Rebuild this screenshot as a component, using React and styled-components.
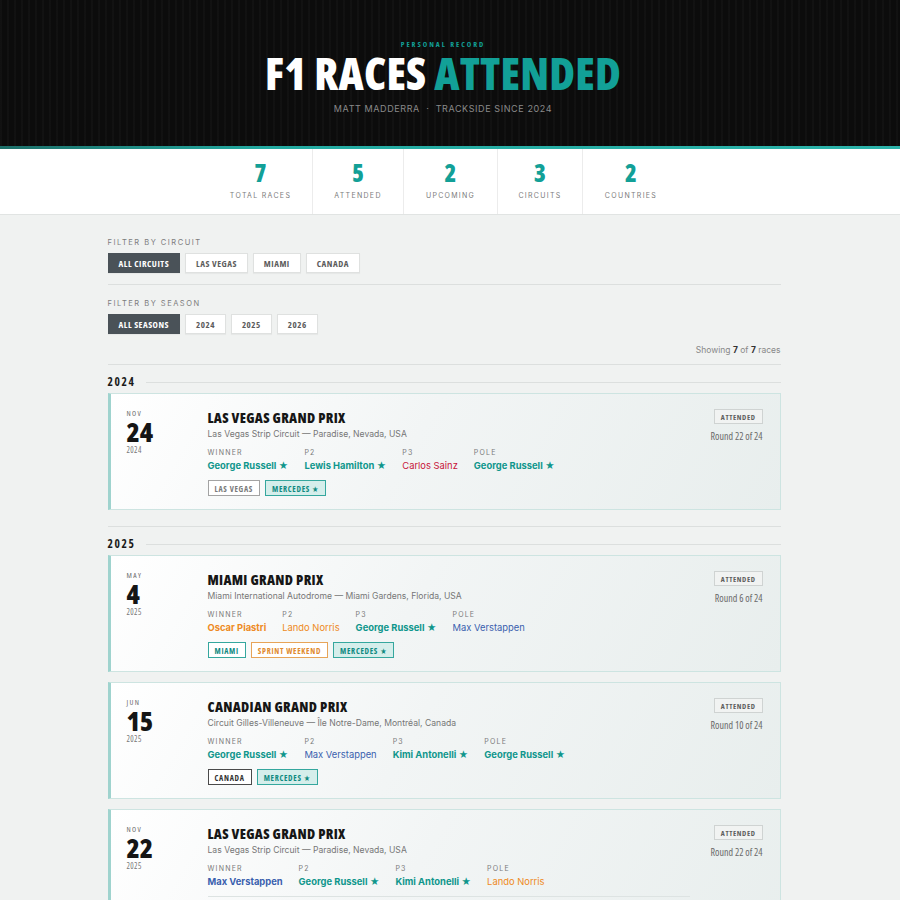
import React from 'react'
import styled, { createGlobalStyle } from 'styled-components'

const COND = `"Open Sans", "Noto Sans", "DejaVu Sans Condensed", sans-serif`
const BODY = `"Inter", "Noto Sans", sans-serif`
const TEAL = '#12a097'

const team = {
  merc: '#0f968c',
  mclaren: '#ee8a24',
  ferrari: '#c8153a',
  redbull: '#3a5fae',
}

const tagTone = {
  grey: { border: '#a3a3a3', color: '#7a7a7a', bg: '#ffffff' },
  merc: { border: '#35a79e', color: '#108a81', bg: '#d5eeeb' },
  teal: { border: '#35a79e', color: '#108a81', bg: '#ffffff' },
  orange: { border: '#e7a458', color: '#e08a2e', bg: '#ffffff' },
  dark: { border: '#4a4a4a', color: '#333333', bg: '#ffffff' },
}

const Global = createGlobalStyle`
  body {
    margin: 0;
    background: #f0f2f1;
    font-family: ${BODY};
  }
`

const S = {
  Hero: styled.header`
    height: 146px;
    padding-right: 14px;
    display: flex;
    flex-direction: column;
    align-items: center;
    background-color: #0c0c0c;
    background-image: repeating-linear-gradient(
      90deg,
      rgba(255, 255, 255, 0.025) 0 2px,
      transparent 2px 7px
    );
  `,
  Eyebrow: styled.div`
    margin-top: 40px;
    font-family: ${COND};
    font-stretch: 75%;
    font-weight: 700;
    font-size: 7.5px;
    line-height: 9px;
    letter-spacing: 2px;
    color: ${TEAL};
  `,
  Title: styled.h1`
    margin: 1px 0 0;
    font-family: ${COND};
    font-stretch: 75%;
    font-weight: 800;
    font-size: 44px;
    line-height: 46px;
    letter-spacing: 0.2px;
    color: #ffffff;
    span {
      color: ${TEAL};
    }
  `,
  Sub: styled.div`
    margin-top: 7px;
    font-size: 9px;
    letter-spacing: 0.6px;
    color: #8a8a8a;
  `,
  Accent: styled.div`
    height: 3px;
    background: linear-gradient(90deg, #1d6f69, #23aaa1 30%, #2cb3aa);
  `,
  Stats: styled.section`
    height: 65px;
    padding-right: 12px;
    background: #ffffff;
    border-bottom: 1px solid #e1e4e3;
    display: flex;
    justify-content: center;
  `,
  Stat: styled.div`
    display: flex;
    flex-direction: column;
    align-items: center;
    justify-content: center;
    padding: 0 20px;
    min-width: ${(p) => p.$w}px;
    box-sizing: border-box;
    border-left: ${(p) => (p.$first ? 'none' : '1px solid #ececec')};
  `,
  StatNum: styled.div`
    font-family: ${COND};
    font-stretch: 75%;
    font-weight: 800;
    font-size: 24px;
    line-height: 24px;
    margin-top: -2px;
    color: ${TEAL};
  `,
  StatLabel: styled.div`
    margin-top: 6px;
    font-size: 7px;
    letter-spacing: 1.3px;
    color: #7c7c7c;
  `,
  Main: styled.main`
    width: 673px;
    margin: 0 auto;
    padding: 23px 0 40px;
    position: relative;
    left: -6px;
  `,
  FilterLabel: styled.div`
    font-size: 7.5px;
    line-height: 10px;
    letter-spacing: 1.5px;
    color: #7c7c7c;
  `,
  Buttons: styled.div`
    display: flex;
    gap: 5px;
    margin-top: 5px;
  `,
  Button: styled.button`
    height: 20px;
    padding: 0 10px;
    border: 1px solid ${(p) => (p.$active ? '#4a5258' : '#dfe1e0')};
    background: ${(p) => (p.$active ? '#4a5258' : '#ffffff')};
    color: ${(p) => (p.$active ? '#ffffff' : '#5c5c5c')};
    font-family: ${COND};
    font-stretch: 75%;
    font-weight: 700;
    font-size: 9px;
    letter-spacing: 0.5px;
    cursor: pointer;
    box-shadow: 0 1px 1px rgba(0, 0, 0, 0.04);
  `,
  Rule: styled.hr`
    border: none;
    border-top: 1px solid #dcdfde;
    margin: 11px 0 14px;
  `,
  Showing: styled.div`
    text-align: right;
    font-size: 8.5px;
    color: #888;
    margin-top: 11px;
    b {
      color: #333;
    }
  `,
  Group: styled.section`
    border-top: 1px solid #dcdfde;
    margin-top: 9px;
    padding-top: 10px;
    & + & {
      margin-top: 16px;
    }
  `,
  YearRow: styled.div`
    display: flex;
    align-items: center;
    gap: 10px;
    margin-bottom: 4px;
    &::after {
      content: '';
      flex: 1;
      height: 1px;
      background: #dcdfde;
    }
  `,
  Year: styled.div`
    font-family: ${COND};
    font-stretch: 75%;
    font-weight: 700;
    font-size: 11.5px;
    line-height: 14px;
    letter-spacing: 1.6px;
    color: #1a1a1a;
  `,
  Cards: styled.div`
    display: flex;
    flex-direction: column;
    gap: 10px;
  `,
  Card: styled.article`
    display: flex;
    padding: 14px 17px 13px 16px;
    border: 1px solid #cde4e1;
    border-left: 3px solid #9fd3ce;
    background: linear-gradient(120deg, #ffffff 0%, #f2f5f5 45%, #e8eeed 100%);
  `,
  DateCol: styled.div`
    width: 81px;
    flex-shrink: 0;
    padding-top: 1px;
    font-family: ${COND};
    font-stretch: 75%;
  `,
  Month: styled.div`
    font-size: 7.5px;
    line-height: 9px;
    letter-spacing: 1.4px;
    color: #6a6a6a;
  `,
  Day: styled.div`
    margin-top: 2px;
    font-weight: 800;
    font-size: 27px;
    line-height: 24px;
    color: #151515;
  `,
  DYear: styled.div`
    margin-top: 1px;
    font-size: 8px;
    line-height: 9px;
    letter-spacing: 0.4px;
    color: #777;
  `,
  Body: styled.div`
    flex: 1;
    min-width: 0;
  `,
  RaceName: styled.h2`
    margin: 0;
    padding-top: 1px;
    font-family: ${COND};
    font-stretch: 75%;
    font-weight: 800;
    font-size: 14px;
    line-height: 17px;
    letter-spacing: 0.3px;
    color: #161616;
  `,
  Circuit: styled.div`
    margin-top: 1px;
    font-size: 8.6px;
    line-height: 14px;
    color: #767676;
  `,
  Results: styled.div`
    display: flex;
    gap: 16px;
    margin-top: 7px;
  `,
  PosLabel: styled.div`
    font-size: 7px;
    line-height: 9px;
    letter-spacing: 1.2px;
    color: #7a7a7a;
  `,
  Driver: styled.div`
    margin-top: 2px;
    font-size: 9.4px;
    line-height: 13px;
    font-weight: ${(p) => (p.$bold ? 700 : 400)};
    color: ${(p) => team[p.$team]};
  `,
  Tags: styled.div`
    display: flex;
    gap: 5px;
    margin-top: 8px;
  `,
  Tag: styled.span`
    height: 16px;
    box-sizing: border-box;
    display: inline-flex;
    align-items: center;
    padding: 0 6px;
    border: 1px solid ${(p) => tagTone[p.$tone].border};
    background: ${(p) => tagTone[p.$tone].bg};
    color: ${(p) => tagTone[p.$tone].color};
    font-family: ${COND};
    font-stretch: 75%;
    font-weight: 700;
    font-size: 8px;
    letter-spacing: 0.7px;
  `,
  Note: styled.div`
    margin-top: 8px;
    padding-top: 10px;
    border-top: 1px solid #dde3e2;
    font-size: 9px;
    color: #666;
  `,
  Side: styled.div`
    width: 73px;
    flex-shrink: 0;
    display: flex;
    flex-direction: column;
    align-items: flex-end;
    padding-top: 1px;
    font-family: ${COND};
    font-stretch: 75%;
  `,
  Badge: styled.span`
    height: 15px;
    box-sizing: border-box;
    display: inline-flex;
    align-items: center;
    padding: 0 6px;
    border: 1px solid #cfd3d2;
    background: #f1f3f2;
    color: #5e5e5e;
    font-weight: 700;
    font-size: 7.5px;
    letter-spacing: 0.6px;
  `,
  Round: styled.div`
    margin-top: 6px;
    font-size: 10px;
    line-height: 12px;
    color: #6a6a6a;
  `,
}

const stats = [
  { n: 7, label: 'TOTAL RACES', w: 103 },
  { n: 5, label: 'ATTENDED', w: 91 },
  { n: 2, label: 'UPCOMING', w: 94 },
  { n: 3, label: 'CIRCUITS', w: 85 },
  { n: 2, label: 'COUNTRIES', w: 97 },
]

const R = (pos, name, teamKey, bold) => ({ pos, name, team: teamKey, bold })

const groups = [
  {
    year: '2024',
    races: [
      {
        mon: 'NOV',
        day: '24',
        yr: '2024',
        name: 'LAS VEGAS GRAND PRIX',
        circuit: 'Las Vegas Strip Circuit — Paradise, Nevada, USA',
        results: [
          R('WINNER', 'George Russell ★', 'merc', true),
          R('P2', 'Lewis Hamilton ★', 'merc', true),
          R('P3', 'Carlos Sainz', 'ferrari'),
          R('POLE', 'George Russell ★', 'merc', true),
        ],
        tags: [['LAS VEGAS', 'grey'], ['MERCEDES ★', 'merc']],
        round: 'Round 22 of 24',
      },
    ],
  },
  {
    year: '2025',
    races: [
      {
        mon: 'MAY',
        day: '4',
        yr: '2025',
        name: 'MIAMI GRAND PRIX',
        circuit: 'Miami International Autodrome — Miami Gardens, Florida, USA',
        results: [
          R('WINNER', 'Oscar Piastri', 'mclaren', true),
          R('P2', 'Lando Norris', 'mclaren'),
          R('P3', 'George Russell ★', 'merc', true),
          R('POLE', 'Max Verstappen', 'redbull'),
        ],
        tags: [['MIAMI', 'teal'], ['SPRINT WEEKEND', 'orange'], ['MERCEDES ★', 'merc']],
        round: 'Round 6 of 24',
      },
      {
        mon: 'JUN',
        day: '15',
        yr: '2025',
        name: 'CANADIAN GRAND PRIX',
        circuit: 'Circuit Gilles-Villeneuve — Île Notre-Dame, Montréal, Canada',
        results: [
          R('WINNER', 'George Russell ★', 'merc', true),
          R('P2', 'Max Verstappen', 'redbull'),
          R('P3', 'Kimi Antonelli ★', 'merc', true),
          R('POLE', 'George Russell ★', 'merc', true),
        ],
        tags: [['CANADA', 'dark'], ['MERCEDES ★', 'merc']],
        round: 'Round 10 of 24',
      },
      {
        mon: 'NOV',
        day: '22',
        yr: '2025',
        name: 'LAS VEGAS GRAND PRIX',
        circuit: 'Las Vegas Strip Circuit — Paradise, Nevada, USA',
        results: [
          R('WINNER', 'Max Verstappen', 'redbull', true),
          R('P2', 'George Russell ★', 'merc', true),
          R('P3', 'Kimi Antonelli ★', 'merc', true),
          R('POLE', 'Lando Norris', 'mclaren'),
        ],
        note: 'Night race on the Strip — second trip to Las Vegas.',
        tags: [['LAS VEGAS', 'grey'], ['MERCEDES ★', 'merc']],
        round: 'Round 22 of 24',
      },
    ],
  },
]

const RaceCard = ({ race }) => (
  <S.Card>
    <S.DateCol>
      <S.Month>{race.mon}</S.Month>
      <S.Day>{race.day}</S.Day>
      <S.DYear>{race.yr}</S.DYear>
    </S.DateCol>
    <S.Body>
      <S.RaceName>{race.name}</S.RaceName>
      <S.Circuit>{race.circuit}</S.Circuit>
      <S.Results>
        {race.results.map((r) => (
          <div key={r.pos}>
            <S.PosLabel>{r.pos}</S.PosLabel>
            <S.Driver $team={r.team} $bold={r.bold}>
              {r.name}
            </S.Driver>
          </div>
        ))}
      </S.Results>
      {race.note && <S.Note>{race.note}</S.Note>}
      <S.Tags>
        {race.tags.map(([t, tone]) => (
          <S.Tag key={t} $tone={tone}>
            {t}
          </S.Tag>
        ))}
      </S.Tags>
    </S.Body>
    <S.Side>
      <S.Badge>ATTENDED</S.Badge>
      <S.Round>{race.round}</S.Round>
    </S.Side>
  </S.Card>
)

const App = () => {
  return (
    <>
      <Global />
      <S.Hero>
        <S.Eyebrow>PERSONAL RECORD</S.Eyebrow>
        <S.Title>
          F1 RACES <span>ATTENDED</span>
        </S.Title>
        <S.Sub>MATT MADDERRA &nbsp;·&nbsp; TRACKSIDE SINCE 2024</S.Sub>
      </S.Hero>
      <S.Accent />
      <S.Stats>
        {stats.map((s, i) => (
          <S.Stat key={s.label} $first={i === 0} $w={s.w}>
            <S.StatNum>{s.n}</S.StatNum>
            <S.StatLabel>{s.label}</S.StatLabel>
          </S.Stat>
        ))}
      </S.Stats>
      <S.Main>
        <S.FilterLabel>FILTER BY CIRCUIT</S.FilterLabel>
        <S.Buttons>
          <S.Button $active>ALL CIRCUITS</S.Button>
          <S.Button>LAS VEGAS</S.Button>
          <S.Button>MIAMI</S.Button>
          <S.Button>CANADA</S.Button>
        </S.Buttons>
        <S.Rule />
        <S.FilterLabel>FILTER BY SEASON</S.FilterLabel>
        <S.Buttons>
          <S.Button $active>ALL SEASONS</S.Button>
          <S.Button>2024</S.Button>
          <S.Button>2025</S.Button>
          <S.Button>2026</S.Button>
        </S.Buttons>
        <S.Showing>
          Showing <b>7</b> of <b>7</b> races
        </S.Showing>
        {groups.map((g) => (
          <S.Group key={g.year}>
            <S.YearRow>
              <S.Year>{g.year}</S.Year>
            </S.YearRow>
            <S.Cards>
              {g.races.map((r) => (
                <RaceCard key={r.mon + r.day} race={r} />
              ))}
            </S.Cards>
          </S.Group>
        ))}
      </S.Main>
    </>
  )
}

export default App
